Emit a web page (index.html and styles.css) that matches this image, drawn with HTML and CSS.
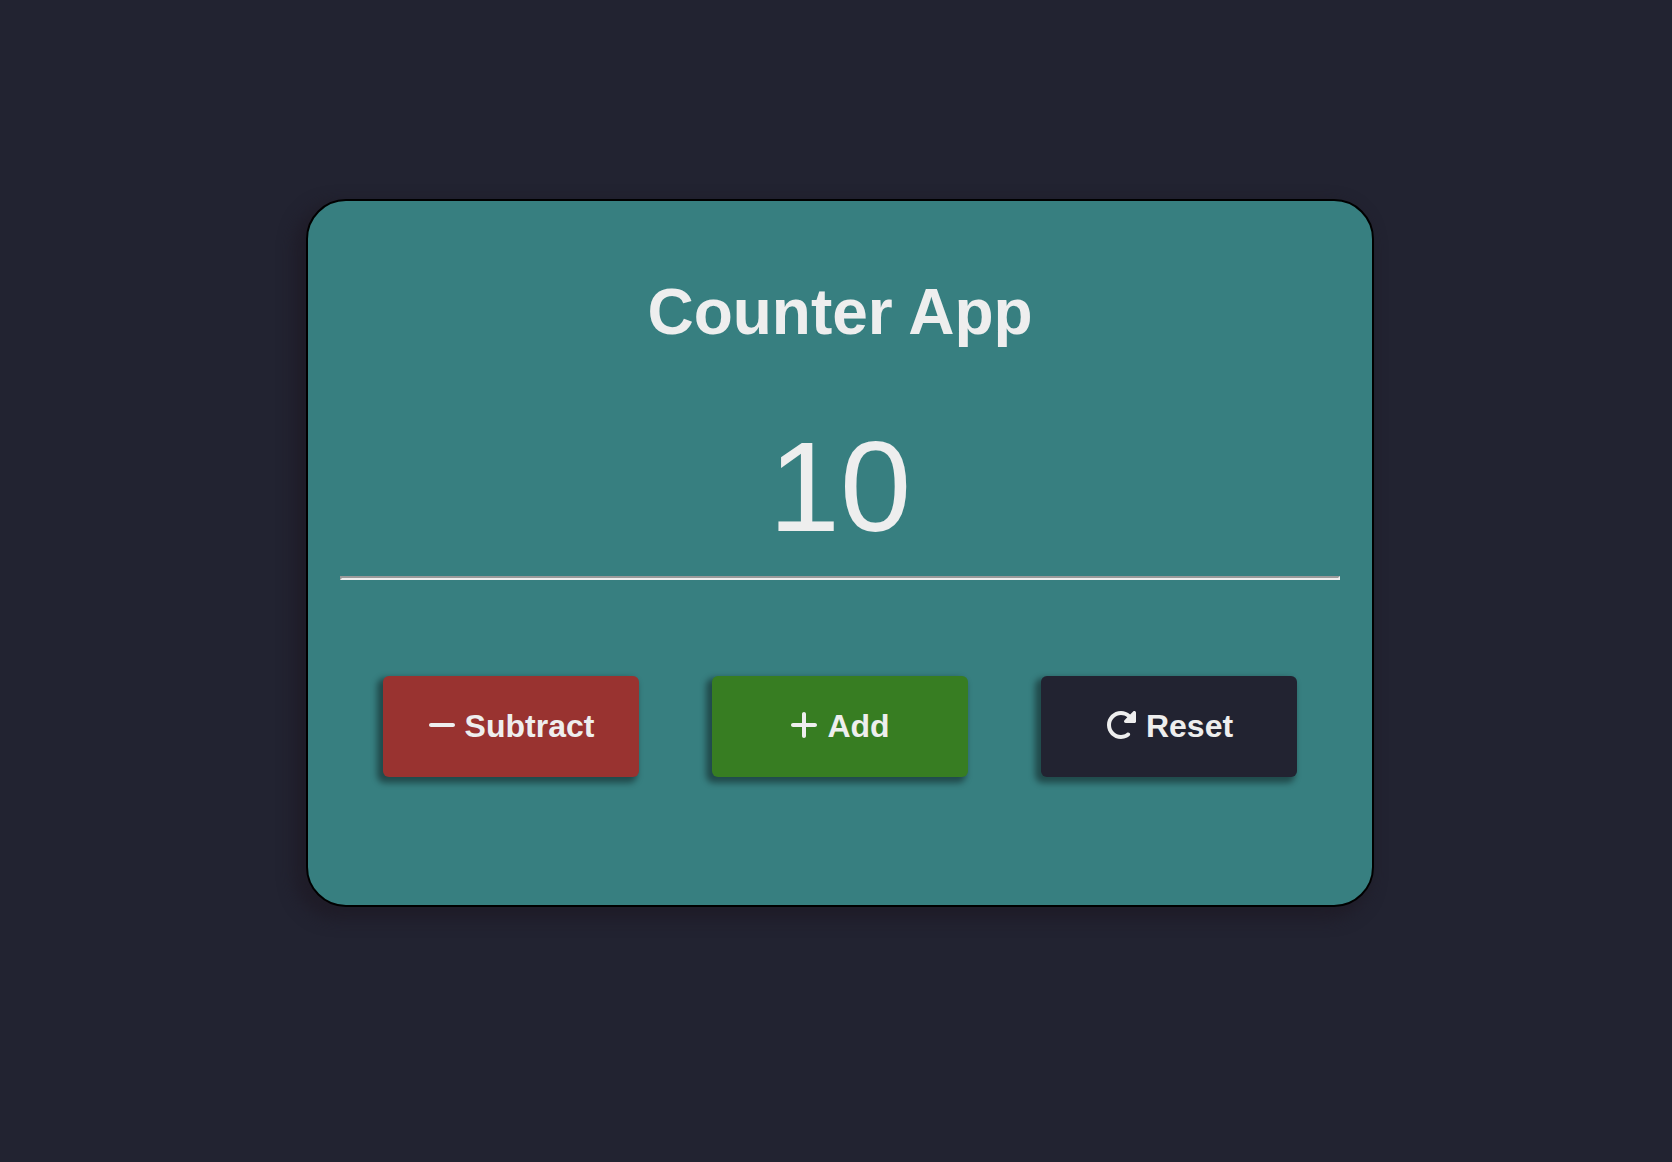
FILE: index.html
```html
<!DOCTYPE html>
<html lang="en">
<head>
  <meta charset="UTF-8">
  <meta name="viewport" content="width=device-width, initial-scale=1">
  <title>Counter App</title>
  <link rel="stylesheet" href="styles.css">
</head>
<body class="page">
  <main class="card">
    <h1 class="title">Counter App</h1>
    <output class="count">10</output>
    <hr class="divider">
    <div class="actions">
      <button class="btn btn-subtract" type="button">
        <svg class="icon" viewBox="0 0 448 512" width="28" height="32" aria-hidden="true"><path d="M432 256c0 17.7-14.3 32-32 32L48 288c-17.7 0-32-14.3-32-32s14.3-32 32-32l352 0c17.7 0 32 14.3 32 32z"/></svg>
        Subtract
      </button>
      <button class="btn btn-add" type="button">
        <svg class="icon" viewBox="0 0 448 512" width="28" height="32" aria-hidden="true"><path d="M256 80c0-17.7-14.3-32-32-32s-32 14.3-32 32V224H48c-17.7 0-32 14.3-32 32s14.3 32 32 32H192V432c0 17.7 14.3 32 32 32s32-14.3 32-32V288H400c17.7 0 32-14.3 32-32s-14.3-32-32-32H256V80z"/></svg>
        Add
      </button>
      <button class="btn btn-reset" type="button">
        <svg class="icon" viewBox="0 0 512 512" width="32" height="32" aria-hidden="true"><path d="M468.9 32.11c13.87 0 27.18 10.77 27.18 27.04v145.9c0 10.59-8.584 19.17-19.17 19.17h-145.7c-16.28 0-27.06-13.32-27.06-27.2c0-6.634 2.461-13.4 7.96-18.9l45.12-45.14c-28.22-23.14-63.85-36.64-101.3-36.64c-88.09 0-159.8 71.69-159.8 159.8S167.8 415.9 255.9 415.9c73.14 0 89.44-38.31 115.1-38.31c18.48 0 31.97 15.04 31.97 31.96c0 35.04-81.59 70.41-147 70.41c-123.4 0-223.9-100.5-223.9-223.9S132.6 32.44 256 32.44c54.6 0 106.2 20.39 146.4 55.26l47.6-47.63C455.5 34.57 462.3 32.11 468.9 32.11z"/></svg>
        Reset
      </button>
    </div>
  </main>
</body>
</html>
```
FILE: styles.css
```css
* {
  box-sizing: border-box;
}

.page {
  margin: 0;
  padding: 199px 0 64px 8px;
  background: #222331;
  color: #eee;
  font-family: "Liberation Sans", Arial, Helvetica, sans-serif;
}

.card {
  display: flex;
  flex-direction: column;
  max-width: 1068px;
  margin: 0 auto;
  padding: 75px 32px 128px;
  border: 2px solid #000;
  border-radius: 40px;
  background: #377f80;
  box-shadow: -8px 8px 16px 4px #1f1c28;
  text-align: center;
}

.title {
  margin: 0 0 65px;
  font-size: 64px;
  line-height: 72px;
}

.count {
  font-size: 128px;
  line-height: 148px;
}

.divider {
  width: 100%;
  margin: 15px 0 96px;
  border: 2px inset #eee;
}

.actions {
  display: flex;
  flex-wrap: wrap;
  justify-content: center;
  gap: 32px 73px;
}

.btn {
  display: flex;
  align-items: center;
  justify-content: center;
  gap: 9px;
  width: 256px;
  padding: 32px 16px;
  border: 0;
  border-radius: 6px;
  box-shadow: -4px 4px 6px 2px rgb(0 0 0 / 42%);
  color: #eee;
  font: bold 32px/37px "Liberation Sans", Arial, Helvetica, sans-serif;
  cursor: pointer;
}

.btn-subtract {
  background: #993330;
}

.btn-add {
  background: #377d22;
}

.btn-reset {
  background: #222331;
}

.icon {
  margin-bottom: 4px;
  fill: currentColor;
}
```
